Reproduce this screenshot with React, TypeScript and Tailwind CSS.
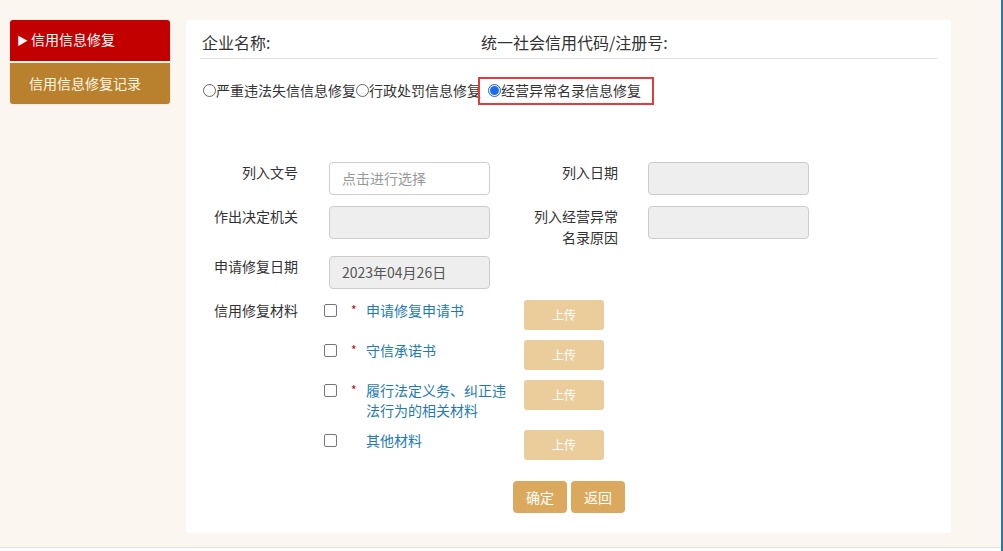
const FONT = "font-['Microsoft_YaHei','Noto_Sans_CJK_SC','Noto_Sans',sans-serif]";

const materials = [
  { required: true, lines: ["申请修复申请书"] },
  { required: true, lines: ["守信承诺书"] },
  { required: true, lines: ["履行法定义务、纠正违", "法行为的相关材料"] },
  { required: false, lines: ["其他材料"] },
];

function Radio({ checked }: { checked?: boolean }) {
  return (
    <span
      className={
        "inline-flex h-[13px] w-[13px] shrink-0 items-center justify-center rounded-full border " +
        (checked ? "border-[#1a5fd0]" : "border-[#666]")
      }
    >
      {checked && <span className="h-[9px] w-[9px] rounded-full bg-[#1a6ee6]"></span>}
    </span>
  );
}

function Field({ value, placeholder, disabled }: { value?: string; placeholder?: string; disabled?: boolean }) {
  return (
    <div
      className={
        "flex h-[33px] w-[161px] items-center rounded-[4px] border border-[#ccc] px-3 text-[14px] " +
        (disabled ? "bg-[#eeeeee] text-[#555]" : "bg-white text-[#999]")
      }
    >
      {value ?? placeholder}
    </div>
  );
}

export default function App() {
  return (
    <div className={`${FONT} relative h-[551px] w-[1003px] overflow-hidden bg-white`}>
      <div className="flex h-[548px] gap-4 border-b border-[#dedede] bg-[#fbf6f0] pl-[10px] pr-[52px] pt-5">
        {/* sidebar */}
        <div className="flex h-[84px] w-[160px] flex-col gap-[2px] overflow-hidden rounded-[3px] shadow-[0_0_2px_rgba(0,0,0,0.15)]">
          <div className="flex h-[41px] items-center gap-[3px] bg-[#c30000] pl-[7px] text-[14px] text-white">
            <span className="text-[11px] leading-none">▶</span>
            <span className="pb-[2px]">信用信息修复</span>
          </div>
          <div className="flex h-[41px] items-center bg-[#b9812d] pl-[19px] text-[14px] text-[#fff6e6]">
            信用信息修复记录
          </div>
        </div>

        {/* card */}
        <div className="flex h-[513px] w-[765px] flex-col rounded-[3px] bg-white px-[14px]">
          <div className="flex border-b border-[#e2e2e2] pb-[4px] pl-[2px] pt-[10px] text-[16px] leading-6 text-[#333]">
            <div className="w-[279px]">企业名称:</div>
            <div>统一社会信用代码/注册号:</div>
          </div>

          <div className="relative mt-[21px] flex h-5 items-center pl-[3px] text-[14px] text-[#333]">
            <Radio />
            <span>严重违法失信信息修复</span>
            <Radio />
            <span>行政处罚信息修复</span>
            <span className="relative ml-[7px] flex items-center">
              <Radio checked />
              <span>经营异常名录信息修复</span>
              <span className="absolute -left-[10px] -top-[3px] h-[28px] w-[176px] border-2 border-[#e23c3c]"></span>
            </span>
          </div>

          {/* form */}
          <div className="mt-[62px] flex flex-col text-[14px] text-[#333]">
            <div className="flex">
              <div className="w-[98px] text-right leading-5">列入文号</div>
              <div className="ml-[31px]">
                <Field placeholder="点击进行选择" />
              </div>
              <div className="ml-[43px] w-[85px] text-right leading-5">列入日期</div>
              <div className="ml-[30px]">
                <Field disabled />
              </div>
            </div>

            <div className="mt-[11px] flex">
              <div className="w-[98px] text-right leading-5">作出决定机关</div>
              <div className="ml-[31px]">
                <Field disabled />
              </div>
              <div className="ml-[43px] w-[85px] text-right leading-[21px]">
                列入经营异常
                <br />
                名录原因
              </div>
              <div className="ml-[30px]">
                <Field disabled />
              </div>
            </div>

            <div className="mt-[8px] flex">
              <div className="w-[98px] text-right leading-5">申请修复日期</div>
              <div className="ml-[31px]">
                <Field disabled value="2023年04月26日" />
              </div>
            </div>

            <div className="mt-[11px] flex">
              <div className="w-[98px] text-right leading-5">信用修复材料</div>
              <div className="ml-[26px] flex flex-col gap-[10px]">
                {materials.map((m, i) => (
                  <div key={i} className="flex">
                    <div className="flex h-5 items-center">
                      <span className="h-[13px] w-[13px] rounded-[2px] border border-[#777] bg-white"></span>
                    </div>
                    <div className="ml-[14px] w-[15px] pt-[2px] text-[12px] leading-4 text-[#d40000]">
                      {m.required ? "*" : ""}
                    </div>
                    <div className="w-[158px] leading-5 text-[#1f7ab5]">
                      {m.lines.map((l) => (
                        <div key={l}>{l}</div>
                      ))}
                    </div>
                    <button className="h-[30px] w-[80px] rounded-[3px] bg-[#ebcc9b] text-[12px] text-white">
                      上传
                    </button>
                  </div>
                ))}
              </div>
            </div>

            <div className="mt-[21px] flex justify-center gap-[4px] pl-[1px]">
              <button className="h-[32px] w-[54px] rounded-[4px] bg-[#dba95e] text-[14px] text-white">确定</button>
              <button className="h-[32px] w-[54px] rounded-[4px] bg-[#dba95e] text-[14px] text-white">返回</button>
            </div>
          </div>
        </div>
      </div>
      <div className="absolute right-0 top-0 h-full w-[2px] bg-[#2b7aa6]"></div>
    </div>
  );
}
